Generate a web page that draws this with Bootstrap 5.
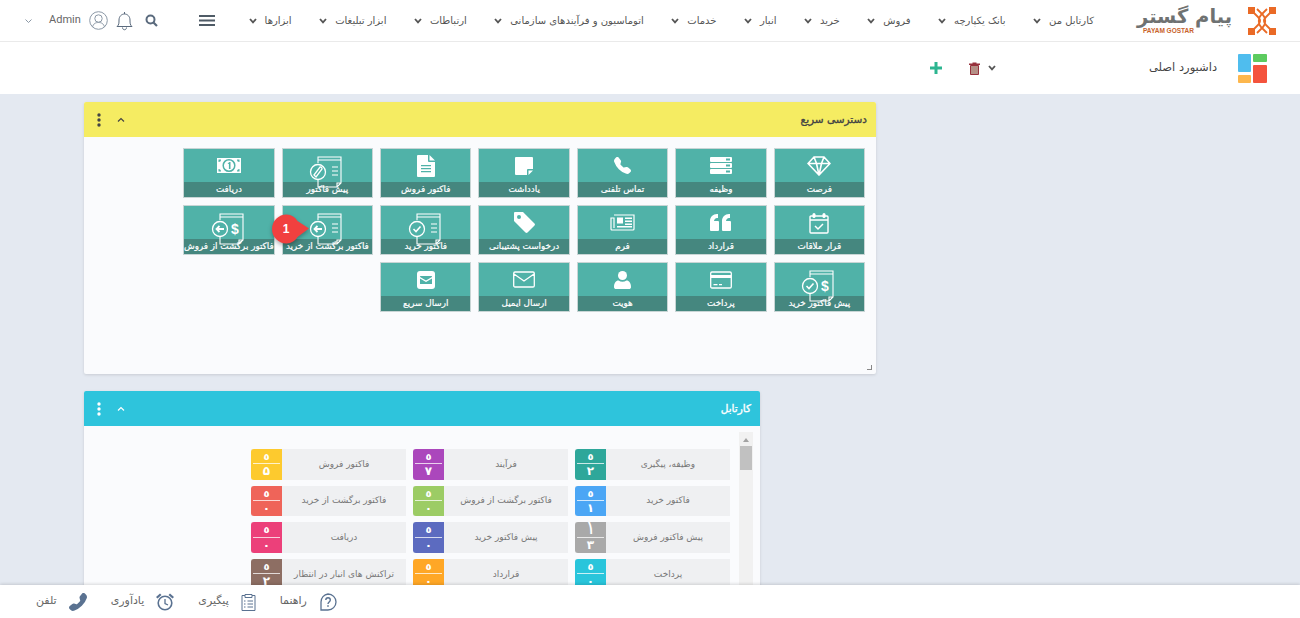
<!DOCTYPE html>
<html lang="fa" dir="rtl">
<head>
    <meta charset="UTF-8">
    <title>داشبورد اصلی</title>
    <link href="https://cdn.jsdelivr.net/npm/bootstrap@5.3.2/dist/css/bootstrap.min.css" rel="stylesheet">
    <style>
        body { font-family: "DejaVu Sans", "Noto Sans", sans-serif; background: #e4e9f1; color: #555; font-size: 10px; }
        .page-wrap { height: 618px; overflow: hidden; }

        .top-bar { height: 42px; background: #fff; border-bottom: 1px solid #eaeaea; flex-shrink: 0; }
        .logo-box { width: 206px; padding-right: 24px; flex-shrink: 0; }
        .logo-words { width: 95px; }
        .logo-name { font-size: 19.5px; font-weight: 700; line-height: 20px; color: #6f7272; white-space: nowrap; }
        .logo-latin { font-family: "Liberation Sans", sans-serif; font-size: 6.5px; font-weight: 700; line-height: 7px; color: #c8622b; direction: ltr; text-align: left; padding-left: 6px; }
        .menu-row { gap: 27.5px; }
        .menu-item { color: #555; font-size: 10px; gap: 8px; white-space: nowrap; text-decoration: none; }
        .menu-item svg { width: 8px; height: 6px; }
        .burger { margin-right: 34px; width: 16px; height: 11px; }
        .tool-icon { color: #5a6a7d; }
        .admin-name { font-family: "Roboto", sans-serif; font-size: 11px; color: #666; }

        .title-bar { height: 52px; background: #fff; flex-shrink: 0; padding-right: 33px; }
        .title-text { font-size: 11.5px; color: #444; margin-right: 21px; width: 68px; white-space: nowrap; }
        .title-actions { margin-right: 153px; }
        .add-btn { margin-right: 27px; }

        .dash-area { flex: 1 1 auto; min-height: 0; padding: 8px 0 0 84px; gap: 17px; overflow: hidden; }
        .dash-panel { background: #fafbfd; box-shadow: 0 1px 3px rgba(0, 0, 0, .12); border-radius: 2px; position: relative; flex-shrink: 0; }
        .panel-wide { width: 792px; height: 272px; }
        .panel-narrow { width: 676px; height: 300px; }
        .panel-head { height: 35px; padding: 0 9px 0 0; border-radius: 2px 2px 0 0; font-size: 10.5px; letter-spacing: -.5px; -webkit-text-stroke: .35px currentColor; }
        .head-yellow { background: #f5ec62; color: #444; }
        .head-cyan { background: #2ec4dc; color: #fff; }
        .head-tools { gap: 16px; padding-left: 13px; }
        .head-cyan .head-tools { color: #fff; }

        .tile-grid { display: grid; grid-template-columns: repeat(7, 91.4px); grid-auto-rows: 50px; gap: 7px 7px; padding: 11px 11px 0 0; }
        .quick-tile { background: #50b2a8; border: 1px solid #c8d5d5; position: relative; display: flex; flex-direction: column; }
        .tile-icon { height: 33px; display: flex; justify-content: center; align-items: center; color: #fff; }
        .tile-icon svg { flex-shrink: 0; position: relative; z-index: 1; }
        .tile-icon .invoice-icon { width: 36px; height: 32px; align-self: flex-start; margin-top: 7px; }
        .tile-label { background: #45877f; color: #fff; height: 15px; line-height: 15px; font-size: 8.8px; letter-spacing: -.45px; -webkit-text-stroke: .2px #fff; text-align: center; white-space: nowrap; }

        .step-pin { position: absolute; left: -11px; top: 8px; width: 38px; height: 30px; z-index: 3; filter: drop-shadow(0 2px 2px rgba(0, 0, 0, .3)); }
        .step-num { position: absolute; left: -11px; top: 8px; width: 29px; height: 30px; z-index: 4; color: #fff; font: 700 12px/30px "Liberation Sans", sans-serif; text-align: center; }
        .resize-mark { position: absolute; right: 4px; bottom: 4px; width: 5px; height: 5px; border-right: 1px solid #888; border-bottom: 1px solid #888; }

        .cartable-body { padding: 23px 30px 0 0; }
        .cartable-grid { display: grid; grid-template-columns: repeat(3, 155px); grid-auto-rows: 30.7px; gap: 6px 7px; }
        .cart-row { background: #eff0f2; color: #777; font-size: 9px; letter-spacing: -.45px; white-space: nowrap; }
        .cart-text { flex: 1 1 auto; text-align: center; }
        .cart-count { width: 31px; height: 100%; color: #fff; font-size: 12px; font-weight: 700; letter-spacing: 0; line-height: 15px; text-align: center; flex-shrink: 0; border-top-left-radius: 3px; border-bottom-left-radius: 3px; overflow: hidden; }
        .cart-count div { height: 50%; }
        .cart-count div:first-child { margin: 0 2px; border-bottom: 1px solid rgba(255, 255, 255, .75); font-size: 10px; }
        .cart-count div.big-digit:first-child { font-size: 19px; font-weight: 400; line-height: 11px; overflow: hidden; }
        .c-teal { background: #2ea79a; } .c-purple { background: #ab47bc; } .c-yellow { background: #fdca2e; }
        .c-blue { background: #4ba6f5; } .c-green { background: #9ccc65; } .c-coral { background: #ef6459; }
        .c-gray { background: #a9a9a9; } .c-indigo { background: #5c6bc0; } .c-pink { background: #ec407a; }
        .c-cyan { background: #29c5db; } .c-orange { background: #ffa726; } .c-brown { background: #8d6e63; }

        .fake-scroll { position: absolute; left: 655px; top: 41px; width: 14px; height: 259px; background: #f1f1f1; }
        .fake-scroll::before { content: ""; position: absolute; left: 4px; top: 6px; border: 3px solid transparent; border-top: 0; border-bottom: 4px solid #a3a3a3; }
        .fake-scroll::after { content: ""; position: absolute; left: 1px; top: 14px; width: 12px; height: 24px; background: #c1c1c1; }

        .bottom-bar { height: 33px; background: #fff; flex-shrink: 0; position: relative; z-index: 5; box-shadow: 0 -1px 3px rgba(0, 0, 0, .14); padding-left: 36px; gap: 24px; font-size: 11px; color: #666; }
        .bottom-item { gap: 12px; white-space: nowrap; }
        .bottom-item svg { color: #5a7291; }
    </style>
</head>
<body>
<svg class="d-none">
    <symbol id="i-chev" viewBox="0 0 8 6"><path d="M1 1l3 3.400L7 1" fill="none" stroke="currentColor" stroke-width="1.800"/></symbol>
    <symbol id="i-diamond" viewBox="0 0 24 20"><path d="M7 1h10l6 6.500L12 19 1 7.500zM1 7.500h22M7 1l2.500 6.500L12 19l2.500-11.500L17 1" fill="none" stroke="#fff" stroke-width="1.600"/></symbol>
    <symbol id="i-server" viewBox="0 0 22 17"><path fill="#fff" d="M1 0h20a1 1 0 0 1 1 1v3a1 1 0 0 1-1 1H1a1 1 0 0 1-1-1V1a1 1 0 0 1 1-1zm0 6h20a1 1 0 0 1 1 1v3a1 1 0 0 1-1 1H1a1 1 0 0 1-1-1V7a1 1 0 0 1 1-1zm0 6h20a1 1 0 0 1 1 1v3a1 1 0 0 1-1 1H1a1 1 0 0 1-1-1v-3a1 1 0 0 1 1-1z"/><path fill="#50b2a8" d="M16 1.500h4v2h-4zM16 7.500h4v2h-4zM16 13.500h4v2h-4z"/></symbol>
    <symbol id="i-phone" viewBox="0 0 16 16"><path fill="currentColor" d="M1.885.511a1.745 1.745 0 0 1 2.61.163L6.29 2.98c.329.423.445.974.315 1.494l-.547 2.19a.678.678 0 0 0 .178.643l2.457 2.457a.678.678 0 0 0 .644.178l2.189-.547a1.745 1.745 0 0 1 1.494.315l2.306 1.794c.829.645.905 1.87.163 2.611l-1.034 1.034c-.74.74-1.846 1.065-2.877.702a18.634 18.634 0 0 1-7.01-4.42 18.634 18.634 0 0 1-4.42-7.009c-.362-1.03-.037-2.137.703-2.877L1.885.511z"/></symbol>
    <symbol id="i-note" viewBox="0 0 18 18"><path fill="#fff" d="M1 0h16a1 1 0 0 1 1 1v11h-5a1 1 0 0 0-1 1v5H1a1 1 0 0 1-1-1V1a1 1 0 0 1 1-1zM13.500 18v-4.500H18z"/></symbol>
    <symbol id="i-file" viewBox="0 0 18 22"><path fill="#fff" d="M1 0h10v6a1 1 0 0 0 1 1h6v14a1 1 0 0 1-1 1H1a1 1 0 0 1-1-1V1a1 1 0 0 1 1-1zM12.500 0L18 5.500h-5.500z"/><path fill="#50b2a8" d="M4 10h10v1.300H4zM4 13h10v1.300H4zM4 16h10v1.300H4z"/></symbol>
    <symbol id="i-money" viewBox="0 0 24 15"><path fill="#fff" d="M0 0h24v15H0z"/><circle cx="12" cy="7.500" r="5.800" fill="#fff" stroke="#50b2a8" stroke-width="1.500"/><path fill="#50b2a8" d="M1.500 1.500h2.500a2.500 2.500 0 0 1-2.500 2.500zM22.500 1.500H20a2.500 2.500 0 0 0 2.500 2.500zM1.500 13.500H4a2.500 2.500 0 0 0-2.500-2.500zM22.500 13.500H20a2.500 2.500 0 0 1 2.500-2.500zM10.500 5.500l2-1.500h1v7h-1.600V6z"/></symbol>
    <symbol id="i-doc" viewBox="0 0 36 32"><path d="M9 7V1h23v26l-4 4H9v-8M9 4h23M28 31v-4h4" fill="none" stroke="#fff" stroke-width="1.100"/><circle cx="9" cy="16" r="7.500" fill="none" stroke="#fff" stroke-width="1.300"/></symbol>
    <symbol id="i-calendar" viewBox="0 0 20 22"><path d="M1 5a1 1 0 0 1 1-1h16a1 1 0 0 1 1 1v15a1 1 0 0 1-1 1H2a1 1 0 0 1-1-1zM1 8h18" fill="none" stroke="#fff" stroke-width="1.400"/><rect x="3.500" y="1" width="3" height="5" rx="1.500" fill="#fff"/><rect x="13.500" y="1" width="3" height="5" rx="1.500" fill="#fff"/><path d="M6 14l3 3 5-5" fill="none" stroke="#fff" stroke-width="1.500"/></symbol>
    <symbol id="i-quote" viewBox="0 0 21 17"><path fill="#fff" d="M9 8v8a1 1 0 0 1-1 1H1a1 1 0 0 1-1-1V7c0-4 3-7 7-7h1v4H7C5.500 4 4 5.500 4 7h4a1 1 0 0 1 1 1zM21 8v8a1 1 0 0 1-1 1h-7a1 1 0 0 1-1-1V7c0-4 3-7 7-7h1v4h-1c-1.500 0-3 1.500-3 3h4a1 1 0 0 1 1 1z"/></symbol>
    <symbol id="i-news" viewBox="0 0 25 17"><path d="M4 1h20v14a1 1 0 0 1-1 1H2a1 1 0 0 1-1-1V4h3v10" fill="none" stroke="#fff" stroke-width="1.200"/><path fill="#fff" d="M7 3.500h6v6H7zM15 3.500h7V5h-7zM15 6.500h7V8h-7zM15 9.500h7V11h-7zM7 12h15v1.500H7z"/></symbol>
    <symbol id="i-tag" viewBox="0 0 21 21"><path fill="#fff" fill-rule="evenodd" d="M1 0h8l11.500 11.500a1.500 1.500 0 0 1 0 2L13.500 20.500a1.500 1.500 0 0 1-2 0L0 9V1a1 1 0 0 1 1-1zM5 3a2 2 0 1 0 0 4 2 2 0 0 0 0-4z"/></symbol>
    <symbol id="i-card" viewBox="0 0 22 18"><path fill="none" stroke="#fff" stroke-width="1.300" d="M2 1h18a1.300 1.300 0 0 1 1.300 1.300v13.400A1.300 1.300 0 0 1 20 17H2a1.300 1.300 0 0 1-1.300-1.300V2.300A1.300 1.300 0 0 1 2 1z"/><path fill="#fff" d="M1 4h20v3H1zM3.500 13h4v1.300h-4zM9 13h3v1.300H9z"/></symbol>
    <symbol id="i-user" viewBox="0 0 17 18"><circle cx="8.500" cy="4.500" r="4.500" fill="#fff"/><path fill="#fff" d="M0 16c0-4 2-6.500 4.500-6.500 2.500 1.800 5.500 1.800 8 0C15 9.500 17 12 17 16c0 1.500-1 2-2 2H2c-1 0-2-.5-2-2z"/></symbol>
    <symbol id="i-mail" viewBox="0 0 22 17"><path d="M2 1h18a1.300 1.300 0 0 1 1.300 1.300v12.400A1.300 1.300 0 0 1 20 16H2a1.300 1.300 0 0 1-1.300-1.300V2.300A1.300 1.300 0 0 1 2 1zM1 3l10 7 10-7" fill="none" stroke="#fff" stroke-width="1.300"/></symbol>
    <symbol id="i-mailbox" viewBox="0 0 18 18"><path fill="#fff" d="M3 0h12a3 3 0 0 1 3 3v12a3 3 0 0 1-3 3H3a3 3 0 0 1-3-3V3a3 3 0 0 1 3-3z"/><path fill="#50b2a8" d="M3.500 5h11a.6.6 0 0 1 .4 1L9 9.500 3.100 6a.6.6 0 0 1 .4-1zM3 7.500l6 3.500 6-3.500V13H3z"/></symbol>
    <symbol id="i-kebab" viewBox="0 0 4 14"><circle cx="2" cy="2" r="1.700" fill="currentColor"/><circle cx="2" cy="7" r="1.700" fill="currentColor"/><circle cx="2" cy="12" r="1.700" fill="currentColor"/></symbol>
    <symbol id="i-up" viewBox="0 0 8 6"><path d="M1 4.500L4 1.500l3 3" fill="none" stroke="currentColor" stroke-width="1.200"/></symbol>
</svg>

<div class="page-wrap d-flex flex-column">
    <header class="top-bar d-flex align-items-center">
        <div class="logo-box d-flex align-items-center gap-3">
            <svg width="28" height="30" viewBox="0 0 28 30" class="flex-shrink-0">
                <path fill="#ea6a26" d="M0 1h7v7H0zM21 1h7v7h-7zM0 22h7v7H0zM21 22h7v7h-7z"/>
                <path d="M5 6l5 5c2.500 2.500 2.500 5.500 0 8l-5 5M23 6l-5 5c-2.500 2.500-2.500 5.500 0 8l5 5M9 3l6 6c3 3 3 9 0 12l-6 6M19 3l-6 6c-3 3-3 9 0 12l6 6" fill="none" stroke="#ea6a26" stroke-width="1.800"/>
            </svg>
            <div class="logo-words">
                <div class="logo-name">پیام گستر</div>
                <div class="logo-latin">PAYAM GOSTAR</div>
            </div>
        </div>
        <nav class="menu-row d-flex align-items-center">
            <a class="menu-item d-flex align-items-center"><span>کارتابل من</span><svg><use href="#i-chev"/></svg></a>
            <a class="menu-item d-flex align-items-center"><span>بانک یکپارچه</span><svg><use href="#i-chev"/></svg></a>
            <a class="menu-item d-flex align-items-center"><span>فروش</span><svg><use href="#i-chev"/></svg></a>
            <a class="menu-item d-flex align-items-center"><span>خرید</span><svg><use href="#i-chev"/></svg></a>
            <a class="menu-item d-flex align-items-center"><span>انبار</span><svg><use href="#i-chev"/></svg></a>
            <a class="menu-item d-flex align-items-center"><span>خدمات</span><svg><use href="#i-chev"/></svg></a>
            <a class="menu-item d-flex align-items-center"><span>اتوماسیون و فرآیندهای سازمانی</span><svg><use href="#i-chev"/></svg></a>
            <a class="menu-item d-flex align-items-center"><span>ارتباطات</span><svg><use href="#i-chev"/></svg></a>
            <a class="menu-item d-flex align-items-center"><span>ابزار تبلیغات</span><svg><use href="#i-chev"/></svg></a>
            <a class="menu-item d-flex align-items-center"><span>ابزارها</span><svg><use href="#i-chev"/></svg></a>
        </nav>
        <svg class="burger" viewBox="0 0 16 11"><path d="M0 1h16M0 5.500h16M0 10h16" stroke="#4f5b66" stroke-width="1.800"/></svg>
        <div class="tool-icon d-flex align-items-center gap-2 me-auto ps-3">
            <svg width="13" height="13" viewBox="0 0 13 13" class="ms-1"><circle cx="5.500" cy="5.500" r="4" fill="none" stroke="currentColor" stroke-width="2"/><path d="M8.500 8.500l3.500 3.500" stroke="currentColor" stroke-width="2.200"/></svg>
            <svg width="17" height="20" viewBox="0 0 17 20"><path d="M1 15.500c2-1.500 2-3.500 2-6.500 0-3.500 2.500-6 5.500-6s5.500 2.500 5.500 6c0 3 0 5 2 6.500zM8.500 3V1M6.500 16.500c0 3 4 3 4 0" fill="none" stroke="currentColor" stroke-width="1"/></svg>
            <svg width="19" height="19" viewBox="0 0 19 19"><circle cx="9.500" cy="9.500" r="8.800" fill="none" stroke="#8b98a6" stroke-width="1"/><circle cx="9.500" cy="7.500" r="3.700" fill="none" stroke="#8b98a6" stroke-width="1"/><path d="M3.500 16c1-3.500 3-4.500 6-4.500s5 1 6 4.500" fill="none" stroke="#8b98a6" stroke-width="1"/></svg>
            <span class="admin-name">Admin</span>
            <svg width="9" height="6" viewBox="0 0 8 6" class="mx-2"><path d="M1 1.500l3 3 3-3" fill="none" stroke="#8b98a6" stroke-width="1"/></svg>
        </div>
    </header>

    <div class="title-bar d-flex align-items-center">
        <svg width="29" height="29" viewBox="0 0 29 29" class="flex-shrink-0"><rect x="0" y="0" width="13" height="18" rx="1" fill="#4fbdee"/><rect x="15" y="0" width="14" height="8" rx="1" fill="#5ccb5f"/><rect x="0" y="21" width="13" height="8" rx="1" fill="#fdb74d"/><rect x="15" y="11" width="14" height="18" rx="1" fill="#f4533d"/></svg>
        <div class="title-text">داشبورد اصلی</div>
        <div class="title-actions d-flex align-items-center">
            <svg width="8" height="6"><use href="#i-chev"/></svg>
            <svg width="11" height="13" viewBox="0 0 11 13" class="me-2"><path fill="#97303c" d="M0 1.500h3.500V.5h4v1H11V3H0z"/><path fill="#b58f86" stroke="#97303c" stroke-width="1" d="M1.500 3.500h8V12.500h-8z"/></svg>
            <svg width="12" height="12" viewBox="0 0 12 12" class="add-btn"><path fill="#2cb590" d="M4.500 0h3v4.500H12v3H7.500V12h-3V7.500H0v-3h4.500z"/></svg>
        </div>
    </div>

    <main class="dash-area d-flex flex-column align-items-end">
        <section class="dash-panel panel-wide">
            <div class="panel-head head-yellow d-flex align-items-center justify-content-between">
                <span>دسترسی سریع</span>
                <div class="head-tools d-flex align-items-center">
                    <svg width="8" height="6"><use href="#i-up"/></svg>
                    <svg width="4" height="14"><use href="#i-kebab"/></svg>
                </div>
            </div>
            <div class="tile-grid">
                <div class="quick-tile"><div class="tile-icon"><svg width="24" height="20"><use href="#i-diamond"/></svg></div><div class="tile-label">فرصت</div></div>
                <div class="quick-tile"><div class="tile-icon"><svg width="22" height="17"><use href="#i-server"/></svg></div><div class="tile-label">وظیفه</div></div>
                <div class="quick-tile"><div class="tile-icon"><svg width="17" height="17"><use href="#i-phone"/></svg></div><div class="tile-label">تماس تلفنی</div></div>
                <div class="quick-tile"><div class="tile-icon"><svg width="18" height="18"><use href="#i-note"/></svg></div><div class="tile-label">یادداشت</div></div>
                <div class="quick-tile"><div class="tile-icon"><svg width="18" height="22"><use href="#i-file"/></svg></div><div class="tile-label">فاکتور فروش</div></div>
                <div class="quick-tile"><div class="tile-icon"><svg class="invoice-icon" viewBox="0 0 36 32"><use href="#i-doc"/><path d="M6 20l6-8a1.700 1.700 0 0 1 2 2l-6 8z" fill="none" stroke="#fff" stroke-width="1.300" transform="translate(-1 -1)"/><path d="M23 11h6M23 15h6M23 19h6" stroke="#fff" stroke-width="1.100"/></svg></div><div class="tile-label">پیش فاکتور</div></div>
                <div class="quick-tile"><div class="tile-icon"><svg width="24" height="15"><use href="#i-money"/></svg></div><div class="tile-label">دریافت</div></div>

                <div class="quick-tile"><div class="tile-icon"><svg width="20" height="22"><use href="#i-calendar"/></svg></div><div class="tile-label">قرار ملاقات</div></div>
                <div class="quick-tile"><div class="tile-icon"><svg width="21" height="17"><use href="#i-quote"/></svg></div><div class="tile-label">قرارداد</div></div>
                <div class="quick-tile"><div class="tile-icon"><svg width="25" height="17"><use href="#i-news"/></svg></div><div class="tile-label">فرم</div></div>
                <div class="quick-tile"><div class="tile-icon"><svg width="21" height="21"><use href="#i-tag"/></svg></div><div class="tile-label">درخواست پشتیبانی</div></div>
                <div class="quick-tile"><div class="tile-icon"><svg class="invoice-icon" viewBox="0 0 36 32"><use href="#i-doc"/><path d="M5.500 16l2.500 2.500 4.500-5" fill="none" stroke="#fff" stroke-width="1.600"/><path d="M23 11h6M23 15h6M23 19h6" stroke="#fff" stroke-width="1.100"/></svg></div><div class="tile-label">فاکتور خرید</div></div>
                <div class="quick-tile">
                    <div class="tile-icon"><svg class="invoice-icon" viewBox="0 0 36 32"><use href="#i-doc"/><path d="M13 16H6M8.500 13L5.500 16l3 3" fill="none" stroke="#fff" stroke-width="1.800"/><path d="M23 11h6M23 15h6M23 19h6" stroke="#fff" stroke-width="1.100"/></svg></div>
                    <div class="tile-label">فاکتور برگشت از خرید</div>
                    <svg class="step-pin" viewBox="0 0 38 30"><path fill="#f1403f" d="M14.500 0.500c5 0 9 3 11 6.500L37 14.500 25.500 23c-2 3.500-6 6.500-11 6.500a14.500 14.500 0 0 1 0-29z"/></svg>
                    <span class="step-num">1</span>
                </div>
                <div class="quick-tile"><div class="tile-icon"><svg class="invoice-icon" viewBox="0 0 36 32"><use href="#i-doc"/><path d="M13 16H6M8.500 13L5.500 16l3 3" fill="none" stroke="#fff" stroke-width="1.800"/><text x="24" y="21" font-size="14" font-family="Liberation Sans" font-weight="700" fill="#fff" text-anchor="middle">$</text></svg></div><div class="tile-label">فاکتور برگشت از فروش</div></div>

                <div class="quick-tile"><div class="tile-icon"><svg class="invoice-icon" viewBox="0 0 36 32"><use href="#i-doc"/><path d="M5.500 16l2.500 2.500 4.500-5" fill="none" stroke="#fff" stroke-width="1.600"/><text x="24" y="21" font-size="14" font-family="Liberation Sans" font-weight="700" fill="#fff" text-anchor="middle">$</text></svg></div><div class="tile-label">پیش فاکتور خرید</div></div>
                <div class="quick-tile"><div class="tile-icon"><svg width="22" height="18"><use href="#i-card"/></svg></div><div class="tile-label">پرداخت</div></div>
                <div class="quick-tile"><div class="tile-icon"><svg width="17" height="18"><use href="#i-user"/></svg></div><div class="tile-label">هویت</div></div>
                <div class="quick-tile"><div class="tile-icon"><svg width="22" height="17"><use href="#i-mail"/></svg></div><div class="tile-label">ارسال ایمیل</div></div>
                <div class="quick-tile"><div class="tile-icon"><svg width="18" height="18"><use href="#i-mailbox"/></svg></div><div class="tile-label">ارسال سریع</div></div>
            </div>
            <span class="resize-mark"></span>
        </section>

        <section class="dash-panel panel-narrow">
            <div class="panel-head head-cyan d-flex align-items-center justify-content-between">
                <span>کارتابل</span>
                <div class="head-tools d-flex align-items-center">
                    <svg width="8" height="6"><use href="#i-up"/></svg>
                    <svg width="4" height="14"><use href="#i-kebab"/></svg>
                </div>
            </div>
            <div class="cartable-body">
                <div class="cartable-grid">
                    <div class="cart-row d-flex align-items-center"><span class="cart-text">وظیفه، پیگیری</span><div class="cart-count c-teal"><div>٥</div><div>۲</div></div></div>
                    <div class="cart-row d-flex align-items-center"><span class="cart-text">فرآیند</span><div class="cart-count c-purple"><div>٥</div><div>۷</div></div></div>
                    <div class="cart-row d-flex align-items-center"><span class="cart-text">فاکتور فروش</span><div class="cart-count c-yellow"><div>٥</div><div>۵</div></div></div>
                    <div class="cart-row d-flex align-items-center"><span class="cart-text">فاکتور خرید</span><div class="cart-count c-blue"><div>٥</div><div>۱</div></div></div>
                    <div class="cart-row d-flex align-items-center"><span class="cart-text">فاکتور برگشت از فروش</span><div class="cart-count c-green"><div>٥</div><div>۰</div></div></div>
                    <div class="cart-row d-flex align-items-center"><span class="cart-text">فاکتور برگشت از خرید</span><div class="cart-count c-coral"><div>٥</div><div>۰</div></div></div>
                    <div class="cart-row d-flex align-items-center"><span class="cart-text">پیش فاکتور فروش</span><div class="cart-count c-gray"><div class="big-digit">۱</div><div>۳</div></div></div>
                    <div class="cart-row d-flex align-items-center"><span class="cart-text">پیش فاکتور خرید</span><div class="cart-count c-indigo"><div>٥</div><div>۰</div></div></div>
                    <div class="cart-row d-flex align-items-center"><span class="cart-text">دریافت</span><div class="cart-count c-pink"><div>٥</div><div>۰</div></div></div>
                    <div class="cart-row d-flex align-items-center"><span class="cart-text">پرداخت</span><div class="cart-count c-cyan"><div>٥</div><div>۰</div></div></div>
                    <div class="cart-row d-flex align-items-center"><span class="cart-text">قرارداد</span><div class="cart-count c-orange"><div>٥</div><div>۰</div></div></div>
                    <div class="cart-row d-flex align-items-center"><span class="cart-text">تراکنش های انبار در انتظار</span><div class="cart-count c-brown"><div>٥</div><div>۲</div></div></div>
                </div>
            </div>
            <div class="fake-scroll"></div>
        </section>
    </main>

    <footer class="bottom-bar d-flex align-items-center justify-content-end">
        <div class="bottom-item d-flex align-items-center">
            <svg width="18" height="18" viewBox="0 0 18 18"><path d="M9 1a8 8 0 0 1 0 16H2v-8a8 8 0 0 1 7-8z" fill="none" stroke="currentColor" stroke-width="1.300"/><path d="M6.800 7c0-3 4.500-3 4.500 0 0 2-2.300 2-2.300 4" fill="none" stroke="currentColor" stroke-width="1.400"/><path fill="currentColor" d="M8.200 12.200h1.600v1.600H8.200z"/></svg>
            <span>راهنما</span>
        </div>
        <div class="bottom-item d-flex align-items-center">
            <svg width="15" height="18" viewBox="0 0 15 18"><path d="M4 2.500H1v15h13v-15h-3M4 1.500h7v3H4zM6.500 8H12M6.500 11H12M6.500 14H12M3 8h1.500M3 11h1.500M3 14h1.500" fill="none" stroke="currentColor" stroke-width="1"/></svg>
            <span>پیگیری</span>
        </div>
        <div class="bottom-item d-flex align-items-center">
            <svg width="18" height="18" viewBox="0 0 18 18"><circle cx="9" cy="10" r="6.800" fill="none" stroke="currentColor" stroke-width="1.600"/><path d="M9 6v4.500l3 1.500" fill="none" stroke="currentColor" stroke-width="1.300"/><path fill="currentColor" d="M0 4l4-3.500 1.500 1.500L1.500 5.500zM18 4L14 .5 12.500 2l4 3.500z"/></svg>
            <span>یادآوری</span>
        </div>
        <div class="bottom-item d-flex align-items-center">
            <svg width="18" height="18" viewBox="0 0 16 16"><use href="#i-phone" transform="matrix(-1 0 0 1 16 0)"/></svg>
            <span>تلفن</span>
        </div>
    </footer>
</div>

<script src="https://cdn.jsdelivr.net/npm/bootstrap@5.3.2/dist/js/bootstrap.bundle.min.js"></script>
</body>
</html>
